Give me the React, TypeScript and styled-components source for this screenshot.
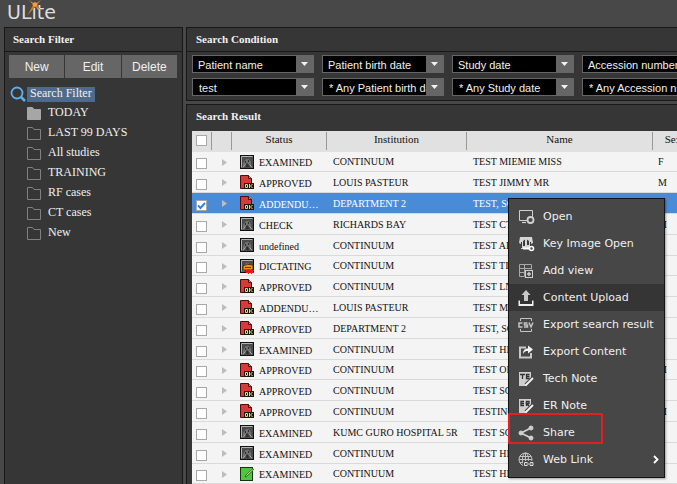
import React from "react";
import styled, { createGlobalStyle, css } from "styled-components";

const GlobalStyle = createGlobalStyle`
  * { box-sizing: border-box; }
  html, body, #root { height: 100%; }
  body { margin: 0; background: #484848; overflow: hidden; }
`;

const serif = `"Liberation Serif", "Times New Roman", serif`;
const sans = `"Liberation Sans", Arial, sans-serif`;

const Page = styled.div`
  position: relative;
  display: flex;
  flex-direction: column;
  height: 100%;
  color: #f0f0f0;
  font-family: ${serif};
`;

const TopBar = styled.header`
  height: 27px;
  flex: none;
  padding-left: 7px;
  display: flex;
`;

const Logo = styled.div`
  position: relative;
  font: 19px/24px "DejaVu Sans", Verdana, sans-serif;
  color: #dedede;
`;

const Spark = styled.svg`
  position: absolute;
  left: 19px;
  top: 0;
`;

const Columns = styled.div`
  flex: 1;
  min-height: 0;
  display: flex;
  gap: 3px;
  padding-left: 4px;
`;

const Panel = styled.section`
  background: #363636;
  border: 1px solid #181818;
`;

const FilterPanel = styled(Panel)`
  width: 179px;
  flex: none;
  border-bottom: 0;
`;

const PanelTitle = styled.h2<{ $plain?: boolean; $wide?: boolean }>`
  margin: 0;
  padding-left: ${(p) => (p.$wide ? 9 : 8)}px;
  font: bold 11px/23px ${serif};
  border-bottom: ${(p) => (p.$plain ? "0" : "1px solid #181818")};
`;

const ButtonRow = styled.div`
  display: flex;
  gap: 1px;
  padding: 3px 5px 0 4px;
`;

const ActionButton = styled.button`
  flex: 1;
  height: 23px;
  padding: 0;
  border: 0;
  background: #666;
  color: #f0f0f0;
  font: 12px ${sans};
`;

const Tree = styled.div`
  padding: 8px 0 0 5px;
  font-size: 12px;
`;

const TreeRoot = styled.div`
  display: flex;
  align-items: center;
  gap: 1px;
  height: 16px;
`;

const RootLabel = styled.span`
  height: 15px;
  padding: 0 3px;
  line-height: 13px;
  background: #4e6a8c;
`;

const TreeList = styled.ul`
  list-style: none;
  margin: 1px 0 0;
  padding: 0 0 0 17px;
`;

const TreeItem = styled.li`
  display: flex;
  align-items: center;
  gap: 7px;
  height: 20px;
  line-height: 18px;
`;

const TreeText = styled.span`
  height: 20px;
`;

const Main = styled.main`
  flex: 1;
  min-width: 0;
  display: flex;
  flex-direction: column;
  gap: 3px;
`;

const WidePanel = styled(Panel)`
  overflow: hidden;
  border-right: 0;
`;

const ResultPanel = styled(WidePanel)`
  flex: 1;
  min-height: 0;
  border-bottom: 0;
`;

const Conditions = styled.div`
  display: grid;
  grid-template-columns: repeat(4, 122px);
  gap: 5px 8px;
  padding: 3px 0 4px 5px;
`;

const Combo = styled.div`
  display: flex;
  height: 18px;
  border: 1px solid #666;
  background: #000;
  position: relative;
`;

const field = css`
  flex: 1;
  min-width: 0;
  border: 0;
  outline: 0;
  border-radius: 0;
  background: #000;
  color: #f0f0f0;
  font: 11px ${sans};
`;

const ComboSelect = styled.select`
  ${field}
  appearance: none;
  padding: 1px 18px 0 5px;
`;

const ComboInput = styled.input`
  ${field}
  padding: 1px 0 0 6px;
`;

const ArrowFace = styled.span`
  position: absolute;
  right: 0;
  top: 0;
  bottom: 0;
  width: 17px;
  background: #666;
  display: grid;
  place-items: center;
  pointer-events: none;
`;

const ArrowButton = styled.button`
  width: 17px;
  flex: none;
  padding: 0;
  border: 0;
  background: #666;
  display: grid;
  place-items: center;
`;

const TableArea = styled.div`
  padding: 3px 0 0 5px;
  overflow: hidden;
`;

const Results = styled.table`
  table-layout: fixed;
  width: 100%;
  min-width: 501px;
  border-collapse: separate;
  border-spacing: 0;
  color: #111;
  font: 10px/12px ${serif};
`;

const Col = styled.col<{ $w?: number }>`
  width: ${(p) => (p.$w ? p.$w + "px" : "auto")};
`;

const Th = styled.th`
  height: 21px;
  padding: 0;
  vertical-align: top;
  background: #e1e1e1;
  font: 11px/14px ${serif};
`;

const HeadCell = styled.div<{ $last?: boolean }>`
  display: flex;
  justify-content: center;
  height: 18px;
  margin-top: 1px;
  border-right: ${(p) => (p.$last ? "0" : "1px solid #999")};
`;

const Row = styled.tr<{ $selected?: boolean }>`
  height: 21px;
  background: ${(p) => (p.$selected ? "#4a8bd8" : "#f4f4f4")};
  color: ${(p) => (p.$selected ? "#fff" : "#111")};
  &:nth-child(5n + 1) { height: 20px; }
`;

const Td = styled.td<{ $pad?: number }>`
  padding: 1px 0 0 ${(p) => p.$pad ?? 6}px;
  border-bottom: 1px solid #dadada;
  white-space: nowrap;
  overflow: hidden;
  vertical-align: middle;
`;

const Tick = styled.input`
  appearance: none;
  display: block;
  width: 11px;
  height: 11px;
  margin: 3px 0 0 4px;
  border: 1px solid #a8a8a8;
  background: #fff;
  &:checked {
    background: #fff url("data:image/svg+xml,%3Csvg xmlns='http://www.w3.org/2000/svg' viewBox='0 0 9 9'%3E%3Cpath d='M1 4.5l2.5 2.5L8 2' fill='none' stroke='%232f80e8' stroke-width='2'/%3E%3C/svg%3E");
  }
`;

const HeadTick = styled(Tick)`
  margin: 3px 0 0;
`;

const Expand = styled.button`
  display: flex;
  align-items: center;
  border: 0;
  padding: 0;
  background: none;
  height: 8px;
`;

const StatusCell = styled.div`
  display: flex;
  align-items: center;
  gap: 5px;
  line-height: 12px;
`;

const StatusText = styled.span`
  padding-top: 2px;
`;

const Menu = styled.div`
  position: absolute;
  left: 508px;
  top: 198px;
  width: 157px;
  padding: 4px 0;
  border: 1px solid #151515;
  background: #474747;
  box-shadow: 1px 1px 2px rgba(0, 0, 0, 0.35);
`;

const MenuItem = styled.button<{ $active?: boolean }>`
  display: flex;
  align-items: center;
  gap: 7px;
  width: 100%;
  height: 27px;
  padding: 0 5px 0 9px;
  border: 0;
  text-align: left;
  background: ${(p) => (p.$active ? "#353535" : "transparent")};
  color: #f0f0f0;
  font: 11px "DejaVu Sans", Verdana, sans-serif;
`;

const MenuLabel = styled.span`
  flex: 1;
  white-space: nowrap;
`;

const Highlight = styled.div`
  position: absolute;
  left: 508px;
  top: 413px;
  width: 95px;
  height: 31px;
  border: 2px solid #e31f24;
  border-radius: 1px;
  pointer-events: none;
`;

const Down = () => (
  <svg width="7" height="4" viewBox="0 0 7 4"><path d="M0 0h7L3.5 4z" fill="#f2f2f2" /></svg>
);

const Folder = ({ filled }: { filled?: boolean }) => (
  <svg width="14" height="13" viewBox="0 0 14 13">
    <path d="M.5 12.5V.5h5l1.500 2h6.500v10z" fill={filled ? "#a6a6a6" : "none"} stroke={filled ? "#a6a6a6" : "#808080"} />
  </svg>
);

const Magnifier = () => (
  <svg width="16" height="16" viewBox="0 0 16 16" fill="none" stroke="#5fb0e8">
    <circle cx="7" cy="7" r="5.500" strokeWidth="1.800" />
    <path d="M11 11l4 4" strokeWidth="2.500" />
  </svg>
);

type IconKind = "scan" | "ok" | "dictate" | "edit";

const Scan = () => (
  <>
    <rect x=".5" y=".5" width="13" height="13" fill="#4c4c4c" stroke="#111" />
    <path d="M1.500 12.500V1.500h11" fill="none" stroke="#b4b4b4" />
    <path d="M3 12V8l3-4h3l2 3v5l-2-3H6z" fill="#707070" />
    <path d="M5 6h1v2H5zM8 5h1v2H8zM6 9l1.500-1L9 12H6z" fill="#303030" />
    <path d="M3 12.500l2.500-3M9.500 9.500l2.500 3" stroke="#b0b0b0" />
  </>
);

const StatusIcon = ({ kind }: { kind: IconKind }) => (
  <svg width="14" height="15" viewBox="0 0 14 15">
    {kind === "scan" && <Scan />}
    {kind === "dictate" && (
      <>
        <Scan />
        <path d="M3 7q4-3 10-1v5H3z" fill="#e8941c" stroke="#3a2000" strokeWidth=".8" />
        <path d="M5 8.500h6" stroke="#6a3c00" />
        <path d="M6 11.500h8M6 13.500h8M8.500 10v5M11.500 10v5" stroke="#f01818" strokeWidth="1.200" />
      </>
    )}
    {kind === "ok" && (
      <>
        <path d="M.5.5h8l3 3v10H.5z" fill="#d83a3a" stroke="#4a1010" />
        <path d="M8.500 .5v3h3" fill="#f08080" stroke="#4a1010" />
        <rect x="4" y="8" width="10" height="6" fill="#1b1808" />
        <path d="M5.500 9.500h2v3h-2zM9.500 9v4M12.500 9l-2 2 2 2" fill="none" stroke="#e8d98a" />
      </>
    )}
    {kind === "edit" && (
      <>
        <rect x=".5" y=".5" width="12" height="13" fill="#4fc63c" stroke="#12350d" />
        <path d="M13 1.500L6 8l-1 2 2-1 6.500-6z" fill="#d9efb0" stroke="#24501c" strokeWidth=".8" />
      </>
    )}
  </svg>
);

const menuArt: Record<string, React.ReactNode> = {
  Open: (
    <g fill="none" stroke="#d0d0d0">
      <path d="M9 11.500H1.500v-10h13V8" /><path d="M4 13.500h4" strokeWidth="1.200" />
      <circle cx="12.500" cy="11" r="3" strokeWidth="1.800" />
    </g>
  ),
  "Key Image Open": (
    <g>
      <path d="M2 1h12l1 6-2 1v5H3V8L1 7z" fill="#d6d6d6" />
      <path d="M7 3.500L5 5v5h2zM9 3.500L11 5v4H9z" fill="#3c3c3c" />
      <path d="M3.500 6v6M12.500 6v4" stroke="#3c3c3c" />
      <path d="M5 12.500h7" stroke="#fff" strokeWidth="2" />
      <circle cx="13.500" cy="12.500" r="2" fill="#474747" stroke="#fff" strokeWidth="1.600" />
    </g>
  ),
  "Add view": (
    <g fill="none" stroke="#d0d0d0">
      <path d="M6.500 13.500h-5v-12h12v5M1.500 5.500h12M6.500 1.500v12M1.500 9.500h5" stroke="#a8a8a8" />
      <rect x="7.500" y="7.500" width="7" height="7" fill="#474747" /><path d="M11 9v4M9 11h4" strokeWidth="1.400" />
    </g>
  ),
  "Content Upload": (
    <g fill="#f0f0f0"><path d="M8 0l4.500 5H10v6H6V5H3.500z" fill="#c8c8c8" /><path d="M.5 10.500H2V14h12v-3.500h1.500V16H.5z" /></g>
  ),
  "Export search result": (
    <g fill="none" stroke="#c4c4c4">
      <path d="M2.500 4V1.500h11V4M2.500 12v2.500h11V12" />
      <path d="M4.500 6H1v4h3.500M9.500 6H6.500v2h3v2h-3.500M11 5.500l2 4.500 2-4.500" strokeWidth="1.500" />
    </g>
  ),
  "Export Content": (
    <g fill="none">
      <path d="M8 3.500H2v10h11V9" stroke="#c8c8c8" strokeWidth="2" />
      <path d="M5 10c0-4 2-5.500 5-5.500V1.500l5 4-5 4V7C8 7 6 7.500 5 10z" fill="#f4f4f4" />
    </g>
  ),
  Share: (
    <g fill="#d0d0d0" stroke="#d0d0d0">
      <path d="M13 3L3 8l10 5" fill="none" strokeWidth="1.800" />
      <circle cx="13" cy="3" r="2" /><circle cx="3" cy="8" r="2" /><circle cx="13" cy="13" r="2" />
    </g>
  ),
  "Web Link": (
    <g fill="none" stroke="#c4c4c4">
      <circle cx="7.500" cy="7.500" r="6.500" /><ellipse cx="7.500" cy="7.500" rx="3" ry="6.500" />
      <path d="M7.500 1v13M1 7.500h13M2 4.500h11M2 10.500h11" />
      <path d="M5 9h11v6H5z" fill="#474747" stroke="none" />
      <path d="M9.500 10.500h-3v3h3M12 10.500h3v3h-3M8.500 12h5" stroke="#e0e0e0" />
    </g>
  ),
};

const NoteArt = ({ er }: { er: boolean }) => (
  <g>
    <path d="M1 1h12v9l-4 5H1z" fill="#cfcfcf" />
    {er ? (
      <path d="M6 3.500H3v4h3M3 5.500h3M8.500 8V3.500h2.500v2H8.500l2.500 2.500" fill="none" stroke="#333" strokeWidth="1.300" />
    ) : (
      <path d="M2 3.500h5M4.500 3.500V8M11.500 3.500H8.500v4h3M8.500 5.500h3" fill="none" stroke="#333" strokeWidth="1.300" />
    )}
    <path d="M15 7l-7 7" stroke="#474747" strokeWidth="4" />
    <path d="M15 7l-6 6-1.500 1.500" stroke="#f4f4f4" strokeWidth="1.800" />
  </g>
);

const folders = ["TODAY", "LAST 99 DAYS", "All studies", "TRAINING", "RF cases", "CT cases", "New"];

const conditions = [
  ["Patient name", "test"],
  ["Patient birth date", "* Any Patient birth date"],
  ["Study date", "* Any Study date"],
  ["Accession number", "* Any Accession number"],
];

type Study = [IconKind, string, string, string, string];
const studies: Study[] = [
  ["scan", "EXAMINED", "CONTINUUM", "TEST MIEMIE MISS", "F"],
  ["ok", "APPROVED", "LOUIS PASTEUR", "TEST JIMMY MR", "M"],
  ["ok", "ADDENDU…", "DEPARTMENT 2", "TEST, SC", ""],
  ["scan", "CHECK", "RICHARDS BAY", "TEST CT", "M"],
  ["scan", "undefined", "CONTINUUM", "TEST AL", ""],
  ["dictate", "DICTATING", "CONTINUUM", "TEST TI", ""],
  ["ok", "APPROVED", "CONTINUUM", "TEST LN", ""],
  ["ok", "ADDENDU…", "LOUIS PASTEUR", "TEST M", ""],
  ["ok", "APPROVED", "DEPARTMENT 2", "TEST, SC", ""],
  ["scan", "EXAMINED", "CONTINUUM", "TEST HE", ""],
  ["ok", "APPROVED", "CONTINUUM", "TEST OR", "M"],
  ["ok", "APPROVED", "CONTINUUM", "TEST SO", ""],
  ["ok", "APPROVED", "CONTINUUM", "TESTING", "M"],
  ["scan", "EXAMINED", "KUMC GURO HOSPITAL 5R", "TEST SO", ""],
  ["scan", "EXAMINED", "CONTINUUM", "TEST HE", ""],
  ["edit", "EXAMINED", "CONTINUUM", "TEST HE", ""],
];

const menu = [
  "Open", "Key Image Open", "Add view", "Content Upload", "Export search result",
  "Export Content", "Tech Note", "ER Note", "Share", "Web Link",
];

export default function App() {
  return (
    <Page>
      <GlobalStyle />
      <TopBar>
        <Logo>
          ULite
          <Spark width="18" height="18" viewBox="0 0 18 18">
            <path d="M3 0l6 4 6-4-4 5 4 5-6-3-8 9 6-11z" fill="#c8782c" />
            <circle cx="9" cy="4.500" r="2.200" fill="#ff9a3c" />
          </Spark>
        </Logo>
      </TopBar>
      <Columns>
        <FilterPanel>
          <PanelTitle>Search Filter</PanelTitle>
          <ButtonRow>
            <ActionButton>New</ActionButton>
            <ActionButton>Edit</ActionButton>
            <ActionButton>Delete</ActionButton>
          </ButtonRow>
          <Tree>
            <TreeRoot>
              <Magnifier />
              <RootLabel>Search Filter</RootLabel>
            </TreeRoot>
            <TreeList>
              {folders.map((name, i) => (
                <TreeItem key={name}>
                  <Folder filled={i === 0} />
                  <TreeText>{name}</TreeText>
                </TreeItem>
              ))}
            </TreeList>
          </Tree>
        </FilterPanel>
        <Main>
          <WidePanel>
            <PanelTitle $wide>Search Condition</PanelTitle>
            <Conditions>
              {conditions.map(([name]) => (
                <Combo key={name}>
                  <ComboSelect aria-label={name + " field"} defaultValue={name}>
                    {conditions.map(([option]) => <option key={option}>{option}</option>)}
                  </ComboSelect>
                  <ArrowFace><Down /></ArrowFace>
                </Combo>
              ))}
              {conditions.map(([name, value]) => (
                <Combo key={value}>
                  <ComboInput aria-label={name} defaultValue={value} />
                  <ArrowButton aria-label={name + " values"}><Down /></ArrowButton>
                </Combo>
              ))}
            </Conditions>
          </WidePanel>
          <ResultPanel>
            <PanelTitle $wide $plain>Search Result</PanelTitle>
            <TableArea>
              <Results>
                <colgroup>
                  <Col $w={20} /><Col $w={20} /><Col $w={95} /><Col $w={140} /><Col $w={186} /><Col $w={40} />
                </colgroup>
                <thead>
                  <tr>
                    <Th><HeadCell><HeadTick type="checkbox" aria-label="Select all" /></HeadCell></Th>
                    <Th><HeadCell /></Th>
                    <Th><HeadCell>Status</HeadCell></Th>
                    <Th><HeadCell>Institution</HeadCell></Th>
                    <Th><HeadCell>Name</HeadCell></Th>
                    <Th><HeadCell $last>Sex</HeadCell></Th>
                  </tr>
                </thead>
                <tbody>
                  {studies.map(([icon, status, place, name, sex], i) => (
                    <Row key={i} $selected={i === 2}>
                      <Td $pad={0}><Tick type="checkbox" aria-label={"Select " + name} defaultChecked={i === 2} /></Td>
                      <Td $pad={10}>
                        <Expand aria-label={"Expand " + name}>
                          <svg width="5" height="7" viewBox="0 0 5 7"><path d="M0 0l5 3.500L0 7z" fill="#bdbdbd" /></svg>
                        </Expand>
                      </Td>
                      <Td $pad={8}>
                        <StatusCell><StatusIcon kind={icon} /><StatusText>{status}</StatusText></StatusCell>
                      </Td>
                      <Td>{place}</Td>
                      <Td>{name}</Td>
                      <Td $pad={5}>{sex}</Td>
                    </Row>
                  ))}
                </tbody>
              </Results>
            </TableArea>
          </ResultPanel>
        </Main>
      </Columns>
      <Menu role="menu">
        {menu.map((label) => (
          <MenuItem key={label} role="menuitem" $active={label === "Content Upload"}>
            <svg width="18" height="16" viewBox="0 0 18 16">
              {label.endsWith("Note") ? <NoteArt er={label === "ER Note"} /> : menuArt[label]}
            </svg>
            <MenuLabel>{label}</MenuLabel>
            {label === "Web Link" && (
              <svg width="6" height="9" viewBox="0 0 6 9"><path d="M1 1l3.500 3.500L1 8" fill="none" stroke="#fff" strokeWidth="1.800" /></svg>
            )}
          </MenuItem>
        ))}
      </Menu>
      <Highlight />
    </Page>
  );
}
